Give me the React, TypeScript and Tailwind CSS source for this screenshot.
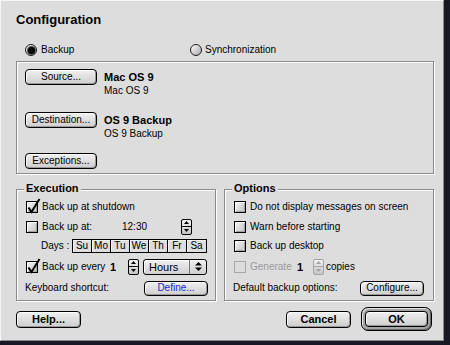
import type { ReactNode } from 'react'

function Checkbox({ checked = false, disabled = false }: { checked?: boolean; disabled?: boolean }) {
  return (
    <div
      className={`relative h-[12px] w-[12px] shrink-0 border ${
        disabled
          ? 'border-[#a6a6a6] bg-[#dddddd]'
          : 'border-black bg-linear-to-br from-[#f6f6f6] to-[#c2c2c2] shadow-[inset_1px_1px_0_#ffffff,inset_-1px_-1px_0_#a2a2a2]'
      }`}
    >
      {checked && (
        <svg className="absolute left-[-1px] top-[-5px]" width="15" height="17" viewBox="0 0 15 17">
          <path d="M2.5 10.5 L5.5 15 L13.5 2" fill="none" stroke="#000" strokeWidth="2" />
        </svg>
      )}
    </div>
  )
}

function Radio({ on = false }: { on?: boolean }) {
  return (
    <div className="flex h-[12px] w-[12px] shrink-0 items-center justify-center rounded-full border border-[#1c1c1c] bg-linear-to-br from-[#ffffff] to-[#a8a8a8]">
      {on && <div className="h-[7px] w-[7px] rounded-full bg-black shadow-[0_0_0_1px_#555555]" />}
    </div>
  )
}

function Stepper({ disabled = false }: { disabled?: boolean }) {
  const c = disabled ? '#a4a4a4' : '#000000'
  return (
    <div
      className={`flex h-[16px] w-[11px] shrink-0 flex-col rounded-[2px] border bg-linear-to-b from-[#f2f2f2] to-[#c6c6c6] ${
        disabled ? 'border-[#a4a4a4]' : 'border-black'
      }`}
    >
      <div className={`flex flex-1 items-center justify-center border-b ${disabled ? 'border-[#a4a4a4]' : 'border-black'}`}>
        <svg width="5" height="3" viewBox="0 0 5 3">
          <path d="M2.5 0 L5 3 L0 3 Z" fill={c} />
        </svg>
      </div>
      <div className="flex flex-1 items-center justify-center">
        <svg width="5" height="3" viewBox="0 0 5 3">
          <path d="M0 0 L5 0 L2.5 3 Z" fill={c} />
        </svg>
      </div>
    </div>
  )
}

function Button({ children, className = '' }: { children: ReactNode; className?: string }) {
  return (
    <div
      className={`flex shrink-0 items-center justify-center rounded-[4px] border border-black bg-linear-to-b from-[#f0f0f0] to-[#cecece] shadow-[inset_1px_1px_0_#ffffff,inset_-1px_-1px_0_#999999] ${className}`}
    >
      {children}
    </div>
  )
}

function Group({ title, className = '', children }: { title: string; className?: string; children: ReactNode }) {
  return (
    <div className={`relative border border-[#8a8a8a] shadow-[1px_1px_0_#ffffff,inset_1px_1px_0_#ffffff] ${className}`}>
      <span className="absolute left-[7px] top-[-8px] bg-[#dddddd] px-[2px] text-[11px] font-bold leading-[13px]">
        {title}
      </span>
      {children}
    </div>
  )
}

const days = ['Su', 'Mo', 'Tu', 'We', 'Th', 'Fr', 'Sa']

export default function App() {
  return (
    <div className="h-[345px] w-[450px] bg-[#181824] font-['Liberation_Sans',Arial,sans-serif] text-[10px] leading-[12px] text-black">
      <div className="flex h-[341px] w-[444px] flex-col border border-b-[#8a8a8a] border-l-[#f6f6f6] border-r-[#8a8a8a] border-t-[#f6f6f6] bg-[#dddddd] pl-[15px] pr-[9px]">
        {/* Title */}
        <div className="mt-[11px] h-[16px] text-[13px] font-bold leading-[16px]">Configuration</div>

        {/* Mode */}
        <div className="mt-[15px] flex h-[14px] items-center pl-[9px]">
          <div className="flex w-[165px] items-center gap-[4px]">
            <Radio on />
            <span>Backup</span>
          </div>
          <div className="flex items-center gap-[3px]">
            <Radio />
            <span>Synchronization</span>
          </div>
        </div>

        {/* Source / destination */}
        <div className="mt-[4px] flex h-[113px] flex-col border border-[#8a8a8a] pl-[8px] pt-[7px] shadow-[1px_1px_0_#ffffff,inset_1px_1px_0_#ffffff]">
          <div className="flex items-start gap-[7px]">
            <Button className="h-[16px] w-[72px]">Source...</Button>
            <div className="mt-[2px] flex flex-col">
              <span className="h-[13px] text-[11px] font-bold leading-[13px]">Mac OS 9</span>
              <span className="h-[13px] leading-[13px]">Mac OS 9</span>
            </div>
          </div>
          <div className="mt-[15px] flex items-start gap-[7px]">
            <Button className="h-[16px] w-[72px]">Destination...</Button>
            <div className="mt-[2px] flex flex-col">
              <span className="h-[13px] text-[11px] font-bold leading-[13px]">OS 9 Backup</span>
              <span className="h-[13px] leading-[13px]">OS 9 Backup</span>
            </div>
          </div>
          <div className="mt-[13px]">
            <Button className="h-[16px] w-[72px]">Exceptions...</Button>
          </div>
        </div>

        {/* Execution / Options */}
        <div className="mt-[15px] flex h-[112px] gap-[8px]">
          <Group title="Execution" className="w-[200px] pl-[9px] pr-[7px] pt-[7px]">
            <div className="flex h-[20px] items-center gap-[4px]">
              <Checkbox checked />
              <span>Back up at shutdown</span>
            </div>
            <div className="flex h-[19px] items-center">
              <Checkbox />
              <span className="ml-[4px] w-[80px]">Back up at:</span>
              <span className="w-[59px]">12:30</span>
              <Stepper />
            </div>
            <div className="flex h-[19px] items-center pl-[15px]">
              <span className="w-[31px]">Days :</span>
              <div className="flex border border-black">
                {days.map((d, i) => (
                  <div
                    key={d}
                    className={`flex h-[12px] w-[19px] items-center justify-center shadow-[inset_1px_1px_0_#f4f4f4] ${
                      i < days.length - 1 ? 'border-r border-black' : ''
                    }`}
                  >
                    {d}
                  </div>
                ))}
              </div>
            </div>
            <div className="flex h-[23px] items-center">
              <Checkbox checked />
              <span className="ml-[4px] w-[68px]">Back up every</span>
              <span className="w-[18px] text-[11px] font-bold">1</span>
              <Stepper />
              <div className="ml-[4px] flex h-[16px] w-[64px] rounded-[3px] border border-black bg-linear-to-b from-[#f0f0f0] to-[#d0d0d0] shadow-[inset_1px_1px_0_#ffffff]">
                <span className="flex flex-1 items-center pl-[5px] text-[11px]">Hours</span>
                <div className="flex w-[17px] items-center justify-center border-l border-[#777777]">
                  <svg width="7" height="9" viewBox="0 0 7 9">
                    <path d="M3.5 0 L7 3.5 L0 3.5 Z M0 5.5 L7 5.5 L3.5 9 Z" fill="#000" />
                  </svg>
                </div>
              </div>
            </div>
            <div className="-ml-[1px] flex h-[20px] items-center justify-between">
              <span>Keyboard shortcut:</span>
              <Button className="h-[15px] w-[64px] text-[#1f1fc8]">Define...</Button>
            </div>
          </Group>

          <Group title="Options" className="w-[210px] pl-[9px] pr-[9px] pt-[7px]">
            <div className="flex h-[20px] items-center gap-[4px]">
              <Checkbox />
              <span>Do not display messages on screen</span>
            </div>
            <div className="flex h-[19px] items-center gap-[4px]">
              <Checkbox />
              <span>Warn before starting</span>
            </div>
            <div className="flex h-[19px] items-center gap-[4px]">
              <Checkbox />
              <span>Back up desktop</span>
            </div>
            <div className="flex h-[23px] items-center">
              <Checkbox disabled />
              <span className="ml-[4px] w-[47px] text-[#9a9a9a]">Generate</span>
              <span className="w-[16px] text-[11px] font-bold">1</span>
              <Stepper disabled />
              <span className="ml-[2px]">copies</span>
            </div>
            <div className="-ml-[1px] flex h-[20px] items-center justify-between">
              <span>Default backup options:</span>
              <Button className="h-[15px] w-[64px]">Configure...</Button>
            </div>
          </Group>
        </div>

        {/* Dialog buttons */}
        <div className="mt-[6px] flex h-[24px] items-center">
          <Button className="h-[17px] w-[65px] text-[11px] font-bold">Help...</Button>
          <div className="flex-1" />
          <Button className="h-[17px] w-[65px] text-[11px] font-bold">Cancel</Button>
          <div className="ml-[10px] mr-[2px] rounded-[7px] border border-black bg-[#a4a4a4] p-[3px] shadow-[inset_1px_1px_0_#e6e6e6,inset_-1px_-1px_0_#6a6a6a]">
            <Button className="h-[16px] w-[63px] text-[11px] font-bold">OK</Button>
          </div>
        </div>
      </div>
    </div>
  )
}
